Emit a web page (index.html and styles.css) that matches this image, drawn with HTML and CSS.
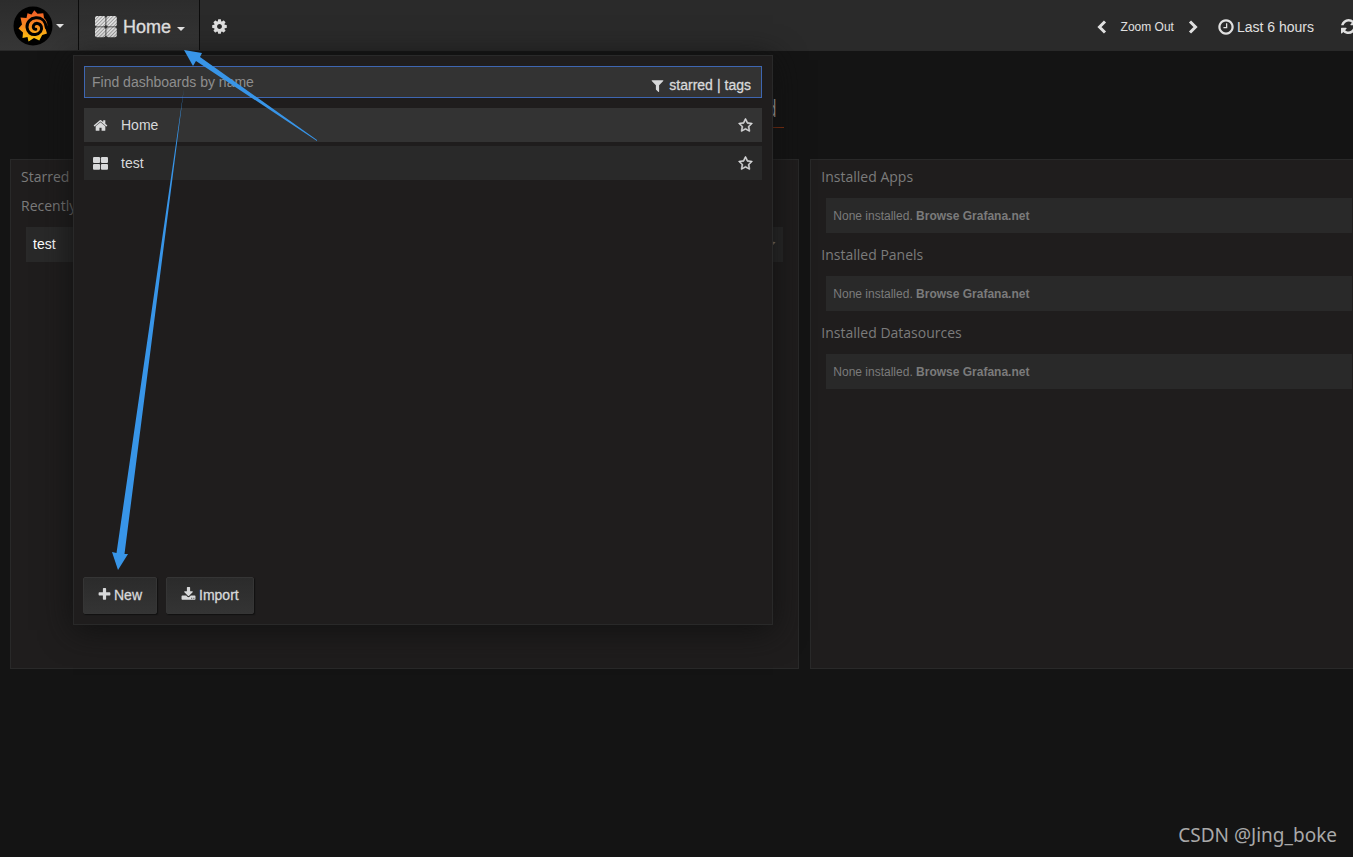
FILE: index.html
```html
<!DOCTYPE html>
<html lang="en">
<head>
<meta charset="utf-8">
<title>Grafana - Home</title>
<link rel="stylesheet" href="styles.css">
</head>
<body>
<svg class="sprite" aria-hidden="true">
  <symbol id="star" viewBox="0 0 1792 1792"><path d="M1201 1004l306-297-422-62-189-382-189 382-422 62 306 297-73 421 378-199 377 199zm527-357q0 22-26 48l-363 354 86 500q1 7 1 20 0 50-41 50-19 0-40-12l-449-236-449 236q-22 12-40 12-21 0-31.500-14.500t-10.500-35.500q0-6 2-20l86-500-364-354q-25-27-25-48 0-37 56-46l502-73 225-455q19-41 49-41t49 41l225 455 502 73q56 9 56 46z"/></symbol>
  <symbol id="grid" viewBox="0 0 14 14"><rect x="0" y="1" width="6.600" height="5.500" rx="1"/><rect x="7.400" y="1" width="6.600" height="5.500" rx="1"/><rect x="0" y="7.400" width="6.600" height="5.500" rx="1"/><rect x="7.400" y="7.400" width="6.600" height="5.500" rx="1"/></symbol>
</svg>

<header class="navbar">
  <button class="brand" type="button" aria-label="Main menu">
    <svg class="logo" viewBox="0 0 40 40">
      <defs><linearGradient id="flame" x1="0" y1="0" x2="0" y2="1"><stop offset="0" stop-color="#f05a28"/><stop offset="0.500" stop-color="#f88a20"/><stop offset="1" stop-color="#fbca0a"/></linearGradient></defs>
      <circle cx="20" cy="20" r="19.500" fill="#000"/>
      <path fill="url(#flame)" d="M21.300 4.300L24.500 7.800L30.300 7.200L31 12Q34.600 15.500 34.300 20L32.300 22L34 27.500L29.200 29L26.300 34.500L21 32L15.500 35.500L14.500 31L9.500 32L10 26.500L5.500 22.500L9 18.500L7.500 11.500L13.500 12L14.500 7.200L18.500 8.500Z"/>
      <path fill="none" stroke="#000" stroke-width="3" stroke-linecap="round" d="M33.300 21.500C32.500 14.500 28 11.300 22.700 11.800C17.200 12.300 13.600 16.500 14 21.300C14.400 26.200 18.300 29.200 22.500 28.500C27.200 27.700 29.500 24 28.300 20.500C27 17 22.300 16.200 20.600 19.400C19.700 21.600 20.800 23.500 22.800 23.200"/>
    </svg>
    <span class="caret"></span>
  </button>
  <button class="dash-toggle" type="button">
    <svg class="dash-icon" viewBox="0 0 22 22">
      <defs><pattern id="hatch" width="2.500" height="2.500" patternUnits="userSpaceOnUse" patternTransform="rotate(45)"><rect width="2.500" height="2.500" fill="#e2e2e2"/><rect width="0.900" height="2.500" fill="#999"/></pattern></defs>
      <g fill="url(#hatch)"><rect x="0" y="0" width="10.500" height="10.500" rx="2"/><rect x="11.300" y="0" width="10.500" height="10.500" rx="2"/><rect x="0" y="11.300" width="10.500" height="10" rx="2"/><rect x="11.300" y="11.300" width="10.500" height="10" rx="2"/></g>
    </svg>
    <span>Home</span>
    <span class="caret"></span>
  </button>
  <button class="nav-btn settings" type="button" aria-label="Settings">
    <svg class="icon cog" viewBox="0 0 1792 1792"><path d="M1152 896q0-106-75-181t-181-75-181 75-75 181 75 181 181 75 181-75 75-181zm512-109v222q0 12-8 23t-20 13l-185 28q-19 54-39 91 35 50 107 138 10 12 10 25t-9 23q-27 37-99 108t-94 71q-12 0-26-9l-138-108q-44 23-91 38-16 136-29 186-7 28-36 28h-222q-14 0-24.500-8.500t-11.500-21.500l-28-184q-49-16-90-37l-141 107q-10 9-25 9-14 0-25-11-126-114-165-168-7-10-7-23 0-12 8-23 15-21 51-66.500t54-70.500q-27-50-41-99l-183-27q-13-2-21-12.500t-8-23.500v-222q0-12 8-23t19-13l186-28q14-46 39-92-40-57-107-138-10-12-10-24 0-10 9-23 26-36 98.500-107.500t94.500-71.500q13 0 26 10l138 107q44-23 91-38 16-136 29-186 7-28 36-28h222q14 0 24.500 8.500t11.500 21.500l28 184q49 16 90 37l142-107q9-9 24-9 13 0 25 10 129 119 165 170 7 8 7 22 0 12-8 23-15 21-51 66.500t-54 70.500q26 50 41 98l183 28q13 2 21 12.500t8 23.500z"/></svg>
  </button>
  <nav class="time-nav" aria-label="Time range">
    <button class="nav-btn" type="button" aria-label="Earlier"><svg class="chevron" viewBox="0 0 10 14"><path d="M8 1.500L2.500 7L8 12.500"/></svg></button>
    <button class="nav-btn zoom-out" type="button">Zoom Out</button>
    <button class="nav-btn" type="button" aria-label="Later"><svg class="chevron" viewBox="0 0 10 14"><path d="M2 1.500L7.500 7L2 12.500"/></svg></button>
    <button class="nav-btn range" type="button"><svg class="icon clock" viewBox="0 0 1792 1792"><path d="M1024 544v448q0 14-9 23t-23 9h-320q-14 0-23-9t-9-23v-64q0-14 9-23t23-9h224v-352q0-14 9-23t23-9h64q14 0 23 9t9 23zm416 352q0-148-73-273t-198-198-273-73-273 73-198 198-73 273 73 273 198 198 273 73 273-73 198-198 73-273zm224 0q0 209-103 385.500t-279.500 279.500-385.500 103-385.500-103-279.500-279.500-103-385.500 103-385.500 279.500-279.500 385.500-103 385.500 103 279.500 279.500 103 385.500z"/></svg>Last 6 hours</button>
    <button class="nav-btn refresh" type="button" aria-label="Refresh"><svg class="icon" viewBox="128 128 1536 1536"><path d="M1639 1056q0 5-1 7-64 268-268 434.500t-478 166.500q-146 0-282.500-55t-243.500-157l-129 129q-19 19-45 19t-45-19-19-45v-448q0-26 19-45t45-19h448q26 0 45 19t19 45-19 45l-137 137q71 66 161 102t187 36q134 0 250-65t186-179q11-17 53-117 8-23 30-23h192q13 0 22.500 9.500t9.500 22.500zm25-800v448q0 26-19 45t-45 19h-448q-26 0-45-19t-19-45 19-45l138-138q-148-137-349-137-134 0-250 65t-186 179q-11 17-53 117-8 23-30 23h-199q-13 0-22.500-9.500t-9.500-22.500v-7q65-268 270-434.500t480-166.500q146 0 284 55.500t245 156.500l130-129q19-19 45-19t45 19 19 45z"/></svg></button>
  </nav>
</header>

<section class="search" aria-label="Dashboard search">
  <div class="search-field">
    <input type="text" placeholder="Find dashboards by name" aria-label="Find dashboards by name">
    <div class="filters">
      <svg class="icon" viewBox="0 0 1792 1792"><path d="M1595 295q17 41-14 70l-493 493v742q0 42-39 59-13 5-25 5-27 0-45-19l-256-256q-19-19-19-45v-486l-493-493q-31-29-14-70 17-39 59-39h1280q42 0 59 39z"/></svg>
      <a href="#starred">starred</a><span>|</span><a href="#tags">tags</a>
    </div>
  </div>
  <div class="results">
    <a class="result selected" href="#home">
      <svg class="icon" viewBox="0 0 1792 1792"><path d="M1472 992v480q0 26-19 45t-45 19h-384v-384h-256v384h-384q-26 0-45-19t-19-45v-480q0-1 .5-3t.5-3l575-474 575 474q1 2 1 6zm223-69l-62 74q-8 9-21 11h-3q-13 0-21-7l-692-577-692 577q-12 8-24 7-13-2-21-11l-62-74q-8-10-7-23.500t11-21.500l719-599q32-26 76-26t76 26l244 204v-195q0-14 9-23t23-9h192q14 0 23 9t9 23v408l219 182q10 8 11 21.500t-7 23.500z"/></svg>
      <span>Home</span>
      <svg class="icon star"><use href="#star"/></svg>
    </a>
    <a class="result" href="#test">
      <svg class="icon"><use href="#grid"/></svg>
      <span>test</span>
      <svg class="icon star"><use href="#star"/></svg>
    </a>
  </div>
  <div class="actions">
    <button class="btn" type="button"><svg class="icon" viewBox="0 0 1792 1792"><path d="M1600 736v192q0 40-28 68t-68 28h-416v416q0 40-28 68t-68 28h-192q-40 0-68-28t-28-68v-416h-416q-40 0-68-28t-28-68v-192q0-40 28-68t68-28h416v-416q0-40 28-68t68-28h192q40 0 68 28t28 68v416h416q40 0 68 28t28 68z"/></svg>New</button>
    <button class="btn import" type="button"><svg class="icon" viewBox="0 0 1792 1792"><path d="M1344 1344q0-26-19-45t-45-19-45 19-19 45 19 45 45 19 45-19 19-45zm256 0q0-26-19-45t-45-19-45 19-19 45 19 45 45 19 45-19 19-45zm128-224v320q0 40-28 68t-68 28h-1472q-40 0-68-28t-28-68v-320q0-40 28-68t68-28h465l135 136q58 56 136 56t136-56l136-136h464q40 0 68 28t28 68zm-325-569q17 41-14 70l-448 448q-18 19-45 19t-45-19l-448-448q-31-29-14-70 17-39 59-39h256v-448q0-26 19-45t45-19h256q26 0 45 19t19 45v448h256q42 0 59 39z"/></svg>Import</button>
  </div>
</section>

<main class="dashboard">
  <div class="headline"><h1>Home Dashboard</h1></div>
  <div class="panels">
    <section class="panel">
      <h2>Starred</h2>
      <h2>Recently</h2>
      <a class="row recent" href="#test"><span>test</span><svg class="icon"><use href="#star"/></svg></a>
    </section>
    <section class="panel apps">
      <h2>Installed Apps</h2>
      <p class="row">None installed. <a href="#apps">Browse Grafana.net</a></p>
      <h2>Installed Panels</h2>
      <p class="row">None installed. <a href="#panels">Browse Grafana.net</a></p>
      <h2>Installed Datasources</h2>
      <p class="row">None installed. <a href="#datasources">Browse Grafana.net</a></p>
    </section>
  </div>
</main>

<svg class="arrows" width="330" height="580" viewBox="0 0 330 580" aria-hidden="true">
  <path d="M184 50L202 53L200 57L317 140L317 141L196 61L193 66Z"/>
  <path d="M184 88L124.500 554L128 554L118 570L112 552L116.500 553Z"/>
</svg>
<footer class="watermark">CSDN @Jing_boke</footer>
</body>
</html>
```
FILE: styles.css
```css
* {
  box-sizing: border-box;
}

body {
  position: relative;
  display: flex;
  flex-direction: column;
  min-height: 100vh;
  margin: 0;
  overflow: hidden;
  background: #141414;
  color: #d8d9da;
  font: 14px/20px "Liberation Sans", Arial, sans-serif;
}

.sprite {
  position: absolute;
  width: 0;
  height: 0;
}

a {
  color: inherit;
  text-decoration: none;
}

button {
  padding: 0;
  border: 0;
  background: none;
  color: inherit;
  font: inherit;
}

h1,
h2,
p {
  margin: 0;
}

.icon {
  flex: none;
  width: 15px;
  height: 15px;
  fill: currentColor;
}

.caret {
  border: 4px solid transparent;
  border-top-color: #e3e3e3;
  border-bottom: 0;
}

.navbar {
  display: flex;
  height: 51px;
  background: #2a2a2a;
  color: #e0e0e0;
  border-bottom: 1px solid #292929;
}

.brand,
.dash-toggle {
  display: flex;
  align-items: center;
  border-right: 1px solid #0c0c0c;
  background: linear-gradient(#2c2c2c, #363636);
}

.brand {
  width: 79px;
  gap: 3px;
  padding: 2px 0 0 13px;
}

.logo {
  width: 40px;
  height: 40px;
}

.dash-toggle {
  width: 121px;
  gap: 6px;
  padding: 3px 0 0 16px;
  font-size: 18px;
  -webkit-text-stroke: 0.3px;
}

.dash-icon {
  width: 22px;
  height: 22px;
}

.dash-toggle .caret {
  margin-top: 4px;
}

.nav-btn {
  display: flex;
  align-items: center;
  gap: 2px;
}

.settings {
  padding: 2px 0 0 11px;
}

.cog {
  width: 17px;
  height: 17px;
}

.time-nav {
  display: flex;
  flex: none;
  margin: 3px -3px 0 auto;
}

.chevron {
  width: 10px;
  height: 14px;
  fill: none;
  stroke: currentColor;
  stroke-width: 3;
}

.zoom-out {
  padding: 0 14px;
  font-size: 12px;
}

.range {
  padding: 0 27px 0 19px;
}

.clock {
  width: 18px;
  height: 18px;
}

.search {
  position: absolute;
  z-index: 2;
  top: 55px;
  left: 73px;
  display: flex;
  flex-direction: column;
  width: 700px;
  min-height: 570px;
  padding: 10px;
  border: 1px solid #292929;
  background: #1f1d1d;
  box-shadow: 0 5px 30px #111;
}

.search-field {
  position: relative;
  margin-bottom: 10px;
}

.search-field input {
  display: block;
  width: 100%;
  height: 32px;
  padding: 0 7px;
  border: 1px solid #3e66b1;
  border-radius: 0;
  background: #333;
  color: #d8d9da;
  font: inherit;
}

.search-field input::placeholder {
  color: #8e8e8e;
}

.filters {
  position: absolute;
  top: 9px;
  right: 11px;
  display: flex;
  align-items: center;
  gap: 4px;
  -webkit-text-stroke: 0.3px;
}

.results {
  display: grid;
  gap: 4px;
}

.result {
  display: flex;
  align-items: center;
  gap: 13px;
  height: 34px;
  padding: 0 9px;
  background: #292929;
}

.selected {
  background: #333;
}

.star {
  margin-left: auto;
  stroke: currentColor;
  stroke-width: 60;
}

.actions {
  display: flex;
  gap: 9px;
  margin: auto 0 0 -1px;
}

.btn {
  display: flex;
  align-items: center;
  gap: 2px;
  height: 37px;
  padding: 0 14px 2px 13px;
  border: 1px solid #353535;
  border-radius: 2px;
  background: linear-gradient(#2b2b2b, #343434);
  box-shadow: 1px 1px 1px #111;
  -webkit-text-stroke: 0.3px;
}

.import {
  gap: 3px;
  padding-left: 14px;
}

.dashboard {
  flex: 1;
  padding: 38px 0 0 10px;
}

.panels,
.headline {
  display: grid;
  grid-template-columns: 16fr 11fr;
  gap: 11px;
}

.headline {
  margin-bottom: 31px;
}

.headline h1 {
  justify-self: end;
  margin-right: 15px;
  padding: 0 7px 0 20px;
  border-bottom: 1px solid #8a3210;
  font: 300 24px/38px "Open Sans", sans-serif;
}

.panel {
  min-width: 0;
  min-height: 510px;
  padding: 2px 15px 10px 10px;
  border: 1px solid #292929;
  background: #1f1d1d;
}

.apps {
  padding-right: 1px;
  border-right: 0;
}

.panel h2 {
  color: #7b7b7b;
  font: 400 14px/29px "Open Sans", sans-serif;
}

.row {
  display: flex;
  align-items: center;
  height: 35px;
  margin: 7px 0;
  padding: 0 7px;
  background: #292929;
  color: #7b7b7b;
  font-size: 12px;
  white-space: pre;
}

.panel .row {
  margin-left: 5px;
}

.row a {
  font-weight: bold;
}

.recent {
  justify-content: space-between;
  padding-bottom: 1px;
  color: #fff;
  font-size: 14px;
}

.recent .icon {
  color: #a08a70;
}

.arrows {
  position: absolute;
  z-index: 3;
  top: 0;
  left: 0;
  fill: #3895e8;
  pointer-events: none;
}

.watermark {
  align-self: flex-end;
  padding: 0 16px 8px 0;
  color: #a9a9a9;
  font: 19px/28px "Noto Sans", sans-serif;
}
```
